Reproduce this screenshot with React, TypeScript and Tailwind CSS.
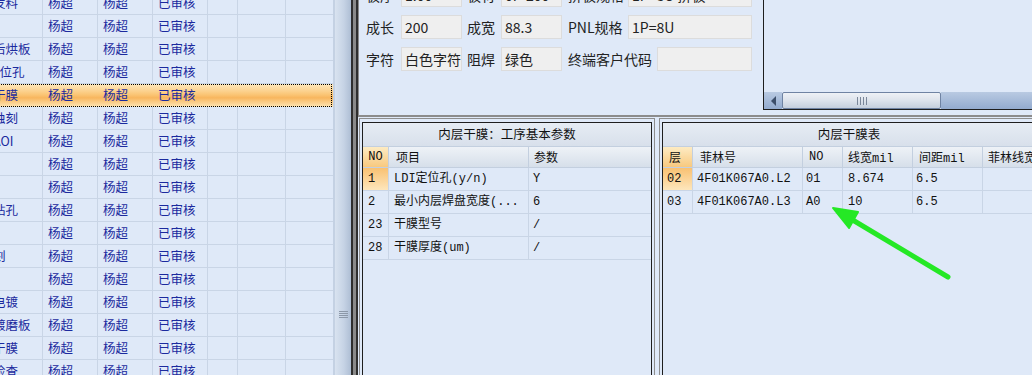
import React from 'react';

const cjk = "font-['Noto_Sans_CJK_SC',sans-serif]";
const mono = "font-['Liberation_Mono','Noto_Sans_CJK_SC',monospace]";

const flowRows = [
    { name: '内层发料', user: '杨超', checker: '杨超', status: '已审核' },
    { name: '', user: '杨超', checker: '杨超', status: '已审核' },
    { name: '外层后烘板', user: '杨超', checker: '杨超', status: '已审核' },
    { name: 'LDI定位孔', user: '杨超', checker: '杨超', status: '已审核' },
    { name: '内层干膜', user: '杨超', checker: '杨超', status: '已审核', selected: true },
    { name: '内层蚀刻', user: '杨超', checker: '杨超', status: '已审核' },
    { name: '内层AOI', user: '杨超', checker: '杨超', status: '已审核' },
    { name: '', user: '杨超', checker: '杨超', status: '已审核' },
    { name: '', user: '杨超', checker: '杨超', status: '已审核' },
    { name: '机械钻孔', user: '杨超', checker: '杨超', status: '已审核' },
    { name: '', user: '杨超', checker: '杨超', status: '已审核' },
    { name: '外蚀刻', user: '杨超', checker: '杨超', status: '已审核' },
    { name: '', user: '杨超', checker: '杨超', status: '已审核' },
    { name: '图形电镀', user: '杨超', checker: '杨超', status: '已审核' },
    { name: '沉铜镀磨板', user: '杨超', checker: '杨超', status: '已审核' },
    { name: '外层干膜', user: '杨超', checker: '杨超', status: '已审核' },
    { name: '外层检查', user: '杨超', checker: '杨超', status: '已审核' },
];

const params = [
    { no: '1', item: 'LDI定位孔(y/n)', value: 'Y', current: true },
    { no: '2', item: '最小内层焊盘宽度(...', value: '6' },
    { no: '23', item: '干膜型号', value: '/' },
    { no: '28', item: '干膜厚度(um)', value: '/' },
];

const films = [
    { layer: '02', film: '4F01K067A0.L2', no: '01', width: '8.674', gap: '6.5', current: true },
    { layer: '03', film: '4F01K067A0.L3', no: 'A0', width: '10', gap: '6.5' },
];

const Field = ({ label, value, labelW, inputW }: { label: string; value: string; labelW: string; inputW: string }) => (
    <>
        <div className={`${labelW} shrink-0 text-[14px] text-[#222] whitespace-nowrap`}>{label}</div>
        <div className={`${inputW} shrink-0 h-full bg-[#efefef] border border-[#dcdcdc] pl-[3px] text-[14px] text-[#222] leading-[22px] whitespace-nowrap overflow-hidden`}>{value}</div>
    </>
);

const FlowGrid = () => (
    <div className={`w-[335px] shrink-0 h-full overflow-hidden bg-[#dfe9f8] border-r-2 border-[#c4d1e3] ${cjk}`}>
        <div className="-mt-[8px]">
            {flowRows.map((r, i) => (
                <div
                    key={i}
                    className={`relative flex h-[23px] text-[12.5px] leading-[22px] text-[#1b2a9e] ${r.selected ? 'bg-[linear-gradient(to_bottom,#fee9bf,#fbc677_45%,#f8b65e_60%,#fde5b5)]' : 'border-b border-[#c9d5e6]'}`}
                >
                    <div className={`w-[43px] shrink-0 overflow-hidden whitespace-nowrap ${r.selected ? '' : 'border-r border-[#c9d5e6]'}`}>
                        <span className="block -ml-[32px]">{r.name}</span>
                    </div>
                    <div className={`w-[55px] shrink-0 pl-[5px] ${r.selected ? '' : 'border-r border-[#c9d5e6]'}`}>{r.user}</div>
                    <div className={`w-[55px] shrink-0 pl-[5px] ${r.selected ? '' : 'border-r border-[#c9d5e6]'}`}>{r.checker}</div>
                    <div className={`w-[55px] shrink-0 pl-[5px] ${r.selected ? '' : 'border-r border-[#c9d5e6]'}`}>{r.status}</div>
                    <div className={`w-[30px] shrink-0 ${r.selected ? '' : 'border-r border-[#c9d5e6]'}`} />
                    <div className={`w-[48px] shrink-0 ${r.selected ? '' : 'border-r border-[#c9d5e6]'}`} />
                    <div className="w-[47px] shrink-0" />
                    {r.selected && (
                        <div className="pointer-events-none absolute inset-y-0 -left-[2px] right-[1px] border border-dotted border-black" />
                    )}
                </div>
            ))}
        </div>
    </div>
);

const Splitter = () => (
    <div className="flex h-full shrink-0">
        <div className="w-[16px] h-full bg-[linear-gradient(to_right,#d9e3f0,#c6d3e5_55%,#aebed4)] flex flex-col items-center">
            <div className="mt-[311px] flex flex-col gap-[1px] w-[9px]">
                <div className="h-[1px] bg-[#8c98a8]" />
                <div className="h-[1px] bg-[#8c98a8]" />
                <div className="h-[1px] bg-[#8c98a8]" />
                <div className="h-[1px] bg-[#8c98a8]" />
            </div>
        </div>
        <div className="w-[2px] bg-[#2e2e2e]" />
        <div className="w-[3px] bg-[#8a8a8a]" />
        <div className="w-[2px] bg-[#2e2e2e]" />
    </div>
);

const TopInfo = () => (
    <div className={`h-[117px] shrink-0 flex border-l border-b-2 border-[#8c8c8c] bg-[#dfe9f8] ${cjk}`}>
        <div className="w-[404px] shrink-0 pl-[7px] flex flex-col gap-[8px] -mt-[17px]">
            <div className="flex items-center h-[24px]">
                <Field label="板厚" value="1.00" labelW="w-[35px]" inputW="w-[61px]" />
                <Field label="板材" value="0P-200" labelW="w-[39px] pl-[5px]" inputW="w-[61px]" />
                <Field label="拼板规格" value="1P=8U 拼板" labelW="w-[66px] pl-[6px]" inputW="w-[124px]" />
            </div>
            <div className="flex items-center h-[24px]">
                <Field label="成长" value="200" labelW="w-[35px]" inputW="w-[61px]" />
                <Field label="成宽" value="88.3" labelW="w-[39px] pl-[5px]" inputW="w-[61px]" />
                <Field label="PNL规格" value="1P=8U" labelW="w-[66px] pl-[6px]" inputW="w-[124px]" />
            </div>
            <div className="flex items-center h-[24px]">
                <Field label="字符" value="白色字符" labelW="w-[35px]" inputW="w-[61px]" />
                <Field label="阻焊" value="绿色" labelW="w-[39px] pl-[5px]" inputW="w-[61px]" />
                <Field label="终端客户代码" value="" labelW="w-[95px] pl-[6px]" inputW="w-[95px]" />
            </div>
        </div>
        <div className="flex-1 h-[110px] border-l border-b border-[#1e1e1e] flex flex-col justify-end">
            <div className="h-[17px] flex">
                <div className="w-[18px] shrink-0 bg-[linear-gradient(to_bottom,#b9cae2,#93abcf)] flex items-center justify-center">
                    <div className="w-0 h-0 border-y-[5px] border-y-transparent border-r-[5px] border-r-[#3d4f6b]" />
                </div>
                <div className="w-[159px] shrink-0 rounded-[2px] border border-[#6f83a3] bg-[linear-gradient(to_bottom,#eef1f6,#dde3ec_50%,#c5cfdd)] flex items-center justify-center gap-[1px]">
                    <div className="w-[1px] h-[8px] bg-[#7a8699]" />
                    <div className="w-[1px] h-[8px] bg-[#7a8699] ml-[1px]" />
                    <div className="w-[1px] h-[8px] bg-[#7a8699] ml-[1px]" />
                    <div className="w-[1px] h-[8px] bg-[#7a8699] ml-[1px]" />
                </div>
                <div className="flex-1 bg-[linear-gradient(to_bottom,#b9cae2,#93abcf)]" />
            </div>
        </div>
    </div>
);

const ParamTable = () => (
    <div className="w-[296px] shrink-0 h-[260px] border border-[#8e8e8e] px-[2px] pt-[3px]">
        <div className={`h-full border border-[#1e1e1e] bg-[#dfe9f8] text-[12px] text-[#111] ${mono}`}>
            <div className={`h-[24px] border-b border-[#c3cfdf] bg-[linear-gradient(to_bottom,#e6ecf4,#d8e0eb)] flex items-center justify-center text-[12.5px] ${cjk}`}>
                内层干膜：工序基本参数
            </div>
            <div className={`h-[21px] flex border-b border-[#c3cfdf] leading-[20px] ${cjk}`}>
                <div className={`w-[26px] shrink-0 text-center bg-[linear-gradient(to_bottom,#fdebc3,#f8c97f)] border-r border-[#c3cfdf] ${mono}`}>NO</div>
                <div className="w-[140px] shrink-0 pl-[7px] bg-[linear-gradient(to_bottom,#eef2f7,#d6dfea)] border-r border-[#c3cfdf]">项目</div>
                <div className="flex-1 pl-[5px] bg-[linear-gradient(to_bottom,#eef2f7,#d6dfea)]">参数</div>
            </div>
            {params.map((p) => (
                <div key={p.no} className="h-[23px] flex border-b border-[#c9d5e6] leading-[22px]">
                    <div className={`w-[26px] shrink-0 pl-[5px] border-r border-[#c9d5e6] ${p.current ? 'bg-[linear-gradient(to_bottom,#f9c172,#fde6bc)]' : ''}`}>{p.no}</div>
                    <div className="w-[140px] shrink-0 pl-[5px] border-r border-[#c9d5e6] whitespace-nowrap overflow-hidden">{p.item}</div>
                    <div className="flex-1 pl-[4px]">{p.value}</div>
                </div>
            ))}
        </div>
    </div>
);

const FilmTable = () => (
    <div className="w-[380px] shrink-0 h-[260px] border border-[#8e8e8e] px-[2px] pt-[3px]">
        <div className={`h-full border border-[#1e1e1e] bg-[#dfe9f8] text-[12px] text-[#111] ${mono}`}>
            <div className={`h-[24px] border-b border-[#c3cfdf] bg-[linear-gradient(to_bottom,#e6ecf4,#d8e0eb)] flex items-center justify-center text-[12.5px] ${cjk}`}>
                内层干膜表
            </div>
            <div className="h-[21px] flex border-b border-[#c3cfdf] leading-[20px] whitespace-nowrap">
                <div className={`w-[30px] shrink-0 pl-[6px] bg-[linear-gradient(to_bottom,#fdebc3,#f8c97f)] border-r border-[#c3cfdf] ${cjk}`}>层</div>
                <div className={`w-[110px] shrink-0 pl-[7px] bg-[linear-gradient(to_bottom,#eef2f7,#d6dfea)] border-r border-[#c3cfdf] ${cjk}`}>菲林号</div>
                <div className="w-[40px] shrink-0 pl-[6px] bg-[linear-gradient(to_bottom,#eef2f7,#d6dfea)] border-r border-[#c3cfdf]">NO</div>
                <div className="w-[70px] shrink-0 pl-[5px] bg-[linear-gradient(to_bottom,#eef2f7,#d6dfea)] border-r border-[#c3cfdf]"><span className={cjk}>线宽</span>mil</div>
                <div className="w-[70px] shrink-0 pl-[6px] bg-[linear-gradient(to_bottom,#eef2f7,#d6dfea)] border-r border-[#c3cfdf]"><span className={cjk}>间距</span>mil</div>
                <div className={`flex-1 pl-[5px] bg-[linear-gradient(to_bottom,#eef2f7,#d6dfea)] overflow-hidden ${cjk}`}>菲林线宽</div>
            </div>
            {films.map((f) => (
                <div key={f.layer} className="h-[23px] flex border-b border-[#c9d5e6] leading-[22px] whitespace-nowrap">
                    <div className={`w-[30px] shrink-0 pl-[4px] border-r border-[#c9d5e6] ${f.current ? 'bg-[linear-gradient(to_bottom,#f9c172,#fde6bc)]' : ''}`}>{f.layer}</div>
                    <div className="w-[110px] shrink-0 pl-[4px] border-r border-[#c9d5e6]">{f.film}</div>
                    <div className="w-[40px] shrink-0 pl-[3px] border-r border-[#c9d5e6]">{f.no}</div>
                    <div className="w-[70px] shrink-0 pl-[5px] border-r border-[#c9d5e6]">{f.width}</div>
                    <div className="w-[70px] shrink-0 pl-[3px] border-r border-[#c9d5e6]">{f.gap}</div>
                    <div className="flex-1" />
                </div>
            ))}
        </div>
    </div>
);

export default function App() {
    return (
        <div className="relative w-[1032px] h-[375px] overflow-hidden flex bg-[#dfe9f8]">
            <FlowGrid />
            <Splitter />
            <div className="flex-1 min-w-0 flex flex-col">
                <TopInfo />
                <div className="flex gap-[4px] pt-[1px] pl-[1px]">
                    <ParamTable />
                    <FilmTable />
                </div>
            </div>

            {/* green annotation arrow */}
            <svg className="pointer-events-none absolute left-0 top-0" width="1032" height="375">
                <line x1="948" y1="277" x2="846" y2="216" stroke="#25e825" strokeWidth="5" strokeLinecap="round" />
                <polygon points="833,208 858,212 849,228" fill="#25e825" stroke="#25e825" strokeWidth="2" strokeLinejoin="round" />
            </svg>
        </div>
    );
}
